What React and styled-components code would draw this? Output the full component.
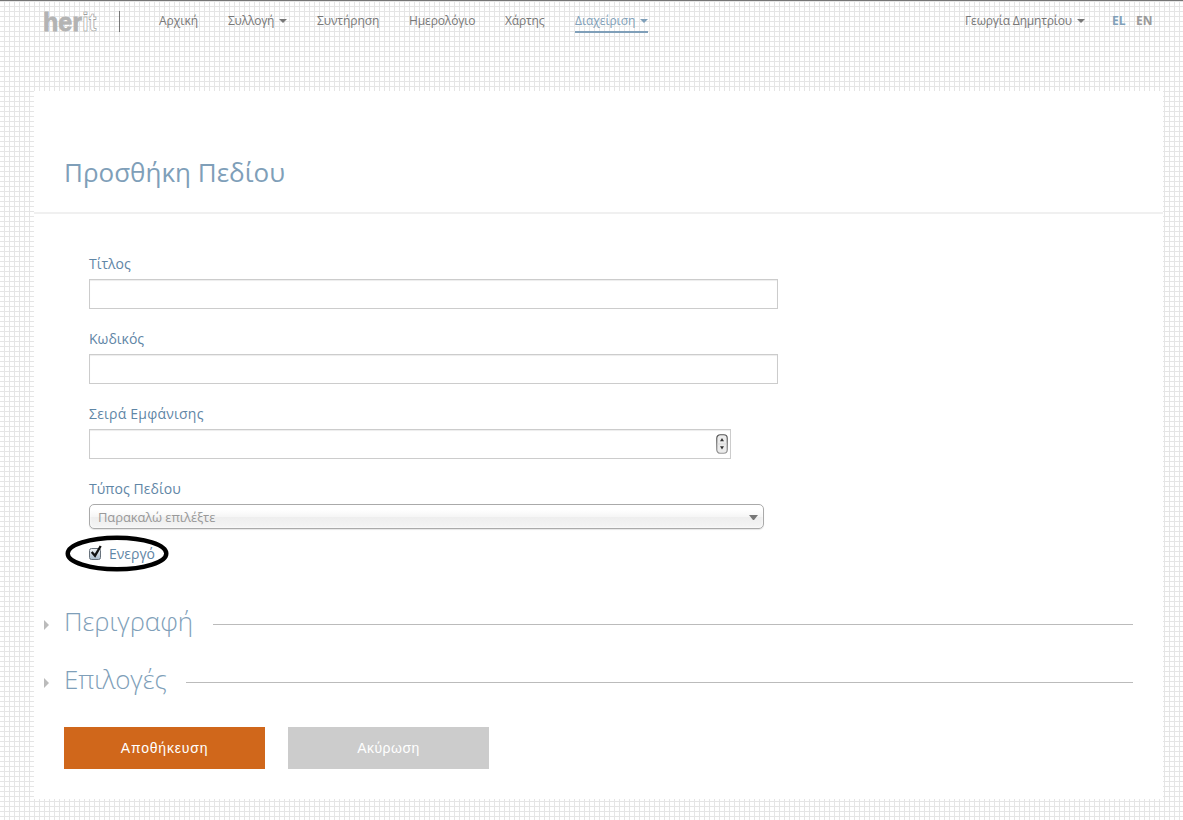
import React from 'react';
import styled, { createGlobalStyle, css } from 'styled-components';

const BLUE = '#7f9fb9';

const Global = createGlobalStyle`
  * { box-sizing: border-box; }
  body {
    margin: 0;
    font-family: "Open Sans", "Noto Sans", sans-serif;
    font-size: 12px;
    color: #777;
    background-color: #fff;
    background-image:
      linear-gradient(to right, transparent 4px, #e5e5e5 4px),
      linear-gradient(to bottom, transparent 1px, #e5e5e5 1px, #e5e5e5 2px, transparent 2px);
    background-size: 5px 5px;
  }
`;

const Page = styled.div`
  height: 820px;
  border-top: 1px solid #757575;
  overflow: hidden;
`;

const Header = styled.header`
  display: flex;
  align-items: flex-start;
  height: 90px;
  padding: 10px 30px 0 44px;
`;

const Logo = styled.svg`
  width: 54px;
  height: 22px;
  flex: none;
  overflow: visible;
`;

const Divider = styled.span`
  width: 1px;
  height: 21px;
  margin: 0 39px 0 21px;
  background: #777;
`;

const Nav = styled.nav`
  display: flex;
  gap: 30px;
`;

const NavItem = styled.a`
  display: flex;
  justify-content: space-between;
  width: ${(p) => p.$width}px;
  height: 22px;
  line-height: 20px;
  letter-spacing: ${(p) => p.$tracking ?? -0.08}px;
  white-space: nowrap;
  color: ${(p) => (p.$active ? BLUE : '#777')};
  ${(p) => p.$active && css`border-bottom: 2px solid ${BLUE};`}
`;

const Caret = styled.span`
  width: 8px;
  height: 4px;
  flex: none;
  margin-top: 8px;
  border: 4px solid transparent;
  border-top-color: currentColor;
  border-bottom: 0;
`;

const UserArea = styled.div`
  display: flex;
  margin-left: auto;
`;

const Lang = styled.a`
  width: ${(p) => p.$width}px;
  margin-left: ${(p) => p.$gap}px;
  line-height: 20px;
  font-weight: 700;
  color: ${(p) => (p.$active ? BLUE : '#999')};
`;

const Panel = styled.main`
  width: 1129px;
  height: 708px;
  margin-left: 34px;
  background: #fff;
`;

const TitleBar = styled.div`
  height: 123px;
  padding: 61px 30px 0;
  border-bottom: 2px solid #f0f0f0;
`;

const Title = styled.h1`
  margin: 0;
  font-size: 26px;
  line-height: 40px;
  font-weight: 400;
  color: ${BLUE};
`;

const Form = styled.form`
  padding: 40px 55px 0;
`;

const Field = styled.div`
  height: ${(p) => p.$height || 75}px;
`;

const Label = styled.label`
  display: block;
  height: 25px;
  line-height: 20px;
  font-size: 14px;
  letter-spacing: ${(p) => p.$tracking || 0}px;
  color: #5f86a6;
`;

const Input = styled.div`
  display: flex;
  align-items: center;
  justify-content: flex-end;
  width: ${(p) => p.$width}px;
  height: 30px;
  padding: 0 2px 0 0;
  border: 1px solid #ccc;
  background: #fff;
  box-shadow: inset 0 1px 1px rgba(0, 0, 0, 0.075);
`;

const Select = styled.div`
  display: flex;
  justify-content: space-between;
  width: 675px;
  height: 25px;
  padding: 0 5px 0 8px;
  border: 1px solid #aaa;
  border-radius: 5px;
  line-height: 25px;
  font-size: 13px;
  letter-spacing: -0.11px;
  color: #999;
  background: linear-gradient(#fff 20%, #f6f6f6 50%, #eee 52%, #f4f4f4 100%);
  box-shadow: inset 0 0 3px #fff, 0 1px 1px rgba(0, 0, 0, 0.1);
`;

const SelectCaret = styled(Caret)`
  width: 9px;
  height: 5px;
  margin-top: 10px;
  border-width: 5px 4.5px 0;
  color: #777;
`;

const CheckRow = styled.div`
  position: relative;
  display: flex;
  align-items: center;
  height: 18px;
  gap: 6px;
  font-size: 14px;
  color: #5f86a6;
`;

const Highlight = styled.svg`
  position: absolute;
  left: -24px;
  top: -9px;
  width: 104px;
  height: 37px;
`;

const Sections = styled.div`
  padding: 31px 30px 0 10px;
`;

const Section = styled.div`
  display: flex;
  align-items: center;
  height: 58px;
`;

const SectionArrow = styled.span`
  width: 5px;
  height: 10px;
  margin: 6px 15px 0 0;
  border: 5px solid transparent;
  border-left-color: #bbb;
  border-right: 0;
`;

const SectionTitle = styled.h2`
  width: ${(p) => p.$width}px;
  margin: -3px 20px 0 0;
  font-size: 26px;
  line-height: 40px;
  font-weight: 300;
  letter-spacing: -0.05px;
  white-space: nowrap;
  color: ${BLUE};
`;

const Rule = styled.span`
  flex: 1;
  height: 1px;
  margin-top: 5px;
  background: #bbb;
`;

const Actions = styled.div`
  display: flex;
  gap: 23px;
  padding: 18px 30px 0;
`;

const Button = styled.button`
  width: 201px;
  height: 42px;
  padding: 0;
  border: 0;
  font: 400 14px/42px "Liberation Sans", Arial, sans-serif;
  letter-spacing: ${(p) => (p.$primary ? 0.8 : 0.45)}px;
  color: #fff;
  background: ${(p) => (p.$primary ? '#d0671b' : '#ccc')};
`;

const Brand = () => (
  <Logo viewBox="0 0 54 22">
    <g fontFamily="Liberation Sans, Arial, sans-serif" fontWeight="700">
      <text x="-1" y="20.2" fontSize="26.5" fill="#b3b3b3" stroke="#b3b3b3" strokeWidth="0.8" textLength="39" lengthAdjust="spacingAndGlyphs">her</text>
      <text x="38.3" y="20.2" fontSize="26.5" fill="#fff" stroke="#8c8c8c" strokeWidth="0.6" textLength="14" lengthAdjust="spacingAndGlyphs">it</text>
    </g>
  </Logo>
);

const Stepper = () => (
  <svg width="12" height="20" viewBox="0 0 12 20">
    <defs>
      <linearGradient id="step" x2="0" y2="1">
        <stop offset="0" stopColor="#555" />
        <stop offset="1" stopColor="#999" />
      </linearGradient>
    </defs>
    <rect x="0.75" y="0.75" width="10.5" height="18.5" rx="3.5" fill="#ececec" stroke="url(#step)" strokeWidth="1.2" />
    <path d="M1.5 10h9" stroke="#dadada" />
    <path d="M6 4l2 3.2H4zM6 15.5l2-3.2H4z" fill="#333" />
  </svg>
);

const Checkbox = () => (
  <svg width="14" height="16" viewBox="0 0 14 16">
    <defs>
      <linearGradient id="box" x2="0" y2="1">
        <stop offset="0" stopColor="#f4f6f8" />
        <stop offset="1" stopColor="#a9bbcc" />
      </linearGradient>
    </defs>
    <rect x="0.5" y="3.5" width="11" height="11" rx="2" fill="url(#box)" stroke="#68727c" />
    <path d="M2.7 7l3.3 3.7L11.7 1" fill="none" stroke="#111" strokeWidth="2.3" />
  </svg>
);

export default function App() {
  return (
    <>
      <Global />
      <Page>
        <Header>
          <Brand />
          <Divider />
          <Nav>
            <NavItem $width={39} $tracking={0}>Αρχική</NavItem>
            <NavItem $width={59} $tracking={-0.2}>Συλλογή<Caret /></NavItem>
            <NavItem $width={62}>Συντήρηση</NavItem>
            <NavItem $width={66} $tracking={-0.12}>Ημερολόγιο</NavItem>
            <NavItem $width={40} $tracking={-0.15}>Χάρτης</NavItem>
            <NavItem $width={73} $active $tracking={-0.04}>Διαχείριση<Caret /></NavItem>
          </Nav>
          <UserArea>
            <NavItem $width={120} $tracking={-0.16}>Γεωργία Δημητρίου<Caret /></NavItem>
            <Lang $width={14} $gap={27} $active>EL</Lang>
            <Lang $width={17} $gap={10}>EN</Lang>
          </UserArea>
        </Header>
        <Panel>
          <TitleBar><Title>Προσθήκη Πεδίου</Title></TitleBar>
          <Form>
            <Field><Label>Τίτλος</Label><Input $width={689} /></Field>
            <Field><Label>Κωδικός</Label><Input $width={689} /></Field>
            <Field><Label $tracking={0.23}>Σειρά Εμφάνισης</Label><Input $width={642}><Stepper /></Input></Field>
            <Field $height={65}>
              <Label $tracking={0.05}>Τύπος Πεδίου</Label>
              <Select>Παρακαλώ επιλέξτε<SelectCaret /></Select>
            </Field>
            <CheckRow>
              <Checkbox />
              <span>Ενεργό</span>
              <Highlight viewBox="0 0 104 37">
                <ellipse cx="52" cy="18.5" rx="49.3" ry="15.8" fill="none" stroke="#000" strokeWidth="4.4" />
              </Highlight>
            </CheckRow>
          </Form>
          <Sections>
            <Section><SectionArrow /><SectionTitle $width={129}>Περιγραφή</SectionTitle><Rule /></Section>
            <Section><SectionArrow /><SectionTitle $width={102}>Επιλογές</SectionTitle><Rule /></Section>
          </Sections>
          <Actions>
            <Button type="button" $primary>Αποθήκευση</Button>
            <Button type="button">Ακύρωση</Button>
          </Actions>
        </Panel>
      </Page>
    </>
  );
}
